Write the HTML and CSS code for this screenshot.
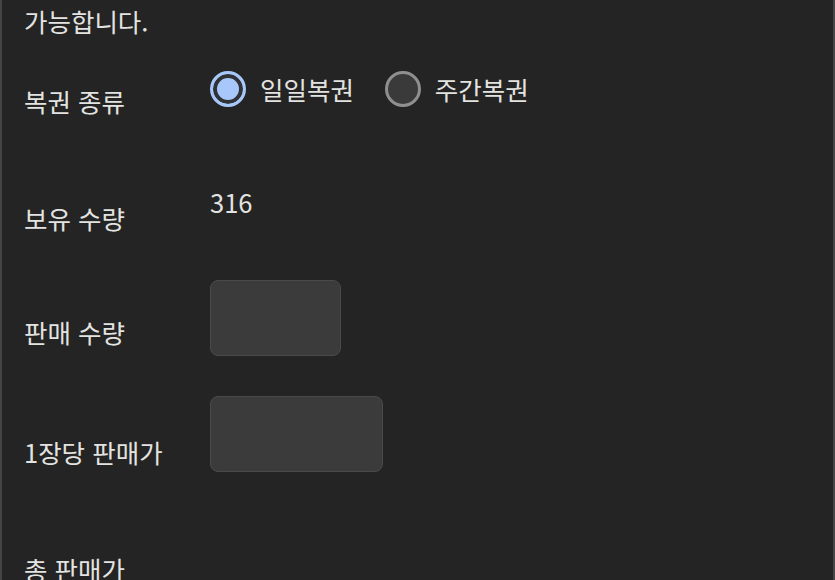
FILE: index.html
```html
<!DOCTYPE html>
<html lang="ko">
<head>
<meta charset="utf-8">
<link rel="stylesheet" href="styles.css">
</head>
<body>
<div class="panel">
  <p class="intro">가능합니다.</p>
  <div class="row row-type">
    <div class="label">복권 종류</div>
    <div class="value radios">
      <label class="option"><span class="radio checked"></span><span class="opt-text">일일복권</span></label>
      <label class="option"><span class="radio"></span><span class="opt-text">주간복권</span></label>
    </div>
  </div>
  <div class="row row-have">
    <div class="label">보유 수량</div>
    <div class="value number">316</div>
  </div>
  <div class="row row-qty">
    <div class="label">판매 수량</div>
    <div class="value"><div class="box box-sm"></div></div>
  </div>
  <div class="row row-price">
    <div class="label">1장당 판매가</div>
    <div class="value"><div class="box box-md"></div></div>
  </div>
  <div class="row row-total">
    <div class="label">총 판매가</div>
    <div class="value"></div>
  </div>
</div>
</body>
</html>
```
FILE: styles.css
```css
html, body {
  margin: 0;
  padding: 0;
  background: #232423;
}
body {
  font-family: "Noto Sans CJK KR", "Noto Sans", sans-serif;
  color: #e3e3e1;
  font-size: 25.5px;
  line-height: 36px;
}
.panel {
  box-sizing: border-box;
  width: 835px;
  height: 580px;
  overflow: hidden;
  border-left: 2px solid #444544;
  border-right: 2px solid #444544;
}
.intro {
  margin: 0;
  padding-top: 3px;
  padding-left: 22px;
  height: 45px;
}
.row {
  display: grid;
  grid-template-columns: 210px 1fr;
  margin-left: -2px;
}
.label {
  padding-left: 24px;
}
.row-type { height: 122px; }
.row-type .label { padding-top: 35px; }
.row-type .value { padding-top: 23px; }

.row-have { height: 100px; }
.row-have .label { padding-top: 30px; }
.row-have .value { padding-top: 14px; }

.row-qty { height: 118px; }
.row-qty .label { padding-top: 44px; }
.row-qty .value { padding-top: 10px; }

.row-price { height: 122px; }
.row-price .label { padding-top: 46px; }
.row-price .value { padding-top: 8px; }

.row-total .label { padding-top: 41px; }

.radios {
  display: flex;
  align-items: flex-start;
  gap: 31px;
}
.option {
  display: flex;
  align-items: center;
  gap: 14px;
  height: 36px;
}
.radio {
  box-sizing: border-box;
  width: 36px;
  height: 36px;
  border-radius: 50%;
  border: 3px solid #8e8f8e;
  background: #3a3a3a;
}
.radio.checked {
  border-color: #a8c7fa;
  background: #a8c7fa;
  box-shadow: inset 0 0 0 4px #313234;
}
.box {
  box-sizing: border-box;
  height: 76px;
  background: #3b3b3b;
  border: 1px solid #4a4a4a;
  border-radius: 8px;
}
.box-sm { width: 131px; }
.box-md { width: 173px; }
```
